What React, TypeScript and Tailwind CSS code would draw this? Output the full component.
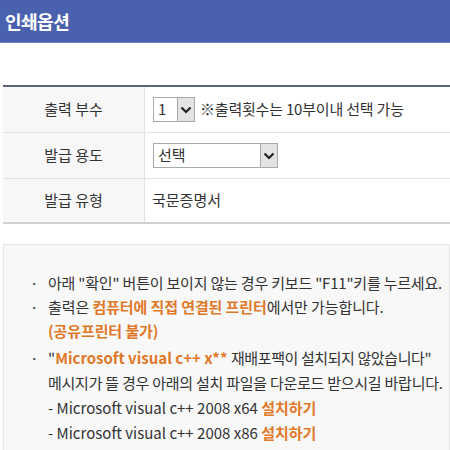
import React from "react";

const font = { fontFamily: '"Noto Sans CJK KR", "Noto Sans", sans-serif' };

function Chevron() {
  return (
    <svg width="12" height="8" viewBox="0 0 12 8">
      <path d="M1.5 1.5 L6 6 L10.5 1.5" fill="none" stroke="#222" strokeWidth="2.2" />
    </svg>
  );
}

function FakeSelect({ value, width }: { value: string; width: string }) {
  return (
    <div className={`flex h-[25px] ${width} border border-[#a9a9a9] bg-white`}>
      <div className="flex flex-1 items-center pl-[4px] text-[15px] text-[#333]">{value}</div>
      <div className="flex w-[17px] items-center justify-center border-l border-[#a9a9a9] bg-[#e3e3e3]">
        <Chevron />
      </div>
    </div>
  );
}

export default function App() {
  return (
    <div className="h-[450px] w-[450px] overflow-hidden bg-white text-[#333]" style={font}>
      <div className="flex h-[43px] items-center border-b border-[#6f84c4] bg-[#4a62ae] px-[5px]">
        <span className="text-[18px] font-bold tracking-[-0.5px] text-white">인쇄옵션</span>
      </div>
      <div className="mt-[42px] pl-[3px]">
        <div className="border-t-2 border-b-2 border-t-[#5b6279] border-b-[#d0d0d0]">
          <div className="flex h-[46px] border-b border-[#e2e2e2]">
            <div className="flex w-[142px] items-center justify-center border-r border-[#e2e2e2] bg-[#f7f7f7] text-[15px]">출력 부수</div>
            <div className="flex flex-1 items-center gap-[5px] pl-[8px] text-[15px] tracking-[-0.2px]">
              <FakeSelect value="1" width="w-[42px]" />
              <span>※출력횟수는 10부이내 선택 가능</span>
            </div>
          </div>
          <div className="flex h-[46px] border-b border-[#e2e2e2]">
            <div className="flex w-[142px] items-center justify-center border-r border-[#e2e2e2] bg-[#f7f7f7] text-[15px]">발급 용도</div>
            <div className="flex flex-1 items-center pl-[8px]">
              <FakeSelect value="선택" width="w-[125px]" />
            </div>
          </div>
          <div className="flex h-[43px]">
            <div className="flex w-[142px] items-center justify-center border-r border-[#e2e2e2] bg-[#f7f7f7] text-[15px]">발급 유형</div>
            <div className="flex flex-1 items-center pl-[7px] text-[15px]">국문증명서</div>
          </div>
        </div>
        <div className="mt-[20px] h-[300px] border border-[#e6e6e6] bg-[#f8f8f8] pl-[26px] pt-[26px] text-[15px] leading-[24px]">
          <div className="flex">
            <span className="w-[18px]">·</span>
            <span className="whitespace-nowrap tracking-[-0.2px]">아래 "확인" 버튼이 보이지 않는 경우 키보드 "F11"키를 누르세요.</span>
          </div>
          <div className="flex">
            <span className="w-[18px] shrink-0">·</span>
            <span className="whitespace-nowrap tracking-[-0.1px]">
              출력은 <b className="text-[#e0782a]">컴퓨터에 직접 연결된 프린터</b>에서만 가능합니다.
              <br />
              <b className="text-[#e0782a]">(공유프린터 불가)</b>
            </span>
          </div>
          <div className="flex pt-[2px] leading-[25px]">
            <span className="w-[18px] shrink-0">·</span>
            <span className="whitespace-nowrap">
              "<b className="text-[#e0782a]">Microsoft visual c++ x**</b>{" "}
              <span className="tracking-[-0.4px]">재배포팩이 설치되지 않았습니다"</span>
              <br />
              <span className="tracking-[-0.25px]">메시지가 뜰 경우 아래의 설치 파일을 다운로드 받으시길 바랍니다.</span>
              <br />
              - Microsoft visual c++ 2008 x64 <b className="text-[#e0782a]">설치하기</b>
              <br />
              - Microsoft visual c++ 2008 x86 <b className="text-[#e0782a]">설치하기</b>
            </span>
          </div>
        </div>
      </div>
    </div>
  );
}
